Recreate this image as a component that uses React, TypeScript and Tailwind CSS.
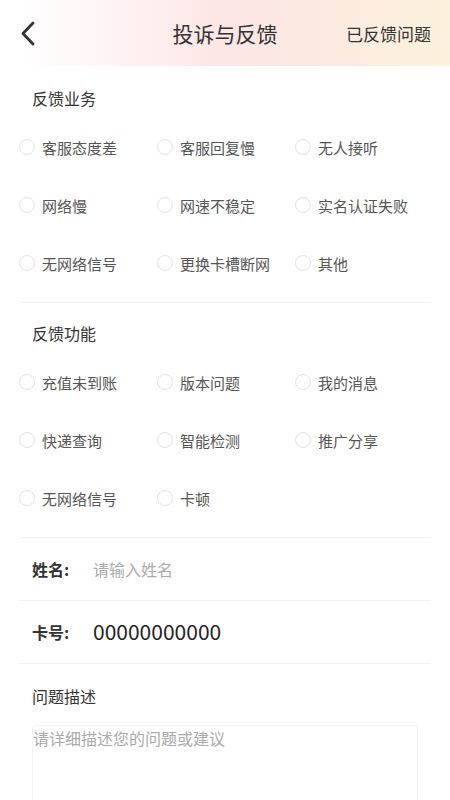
import React from "react";

const font = { fontFamily: '"Noto Sans CJK SC", "Noto Sans", sans-serif' };

function Radio({ label }: { label: string }) {
  return (
    <div className="flex items-center h-[58px]">
      <span className="w-[16px] h-[16px] rounded-full border border-[#e3e3e3] shrink-0" />
      <span className="ml-[7px] text-[15px] text-[#555555] leading-none">{label}</span>
    </div>
  );
}

function Section({ title, items, pt }: { title: string; items: string[]; pt: string }) {
  return (
    <div className={`${pt} pb-[10px] border-b border-[#f2f2f2]`}>
      <div className="pl-[13px] text-[16px] leading-[24px] text-[#333333] mb-[8px]">{title}</div>
      <div className="grid grid-cols-[138px_138px_1fr]">
        {items.map((t, i) => (
          <Radio key={i} label={t} />
        ))}
      </div>
    </div>
  );
}

export default function App() {
  return (
    <div className="w-[450px] h-[800px] bg-white overflow-hidden" style={font}>
      <div className="h-[66px] grid grid-cols-[1fr_auto_1fr] items-center bg-gradient-to-r from-white from-[5%] via-[#fde6e5] to-[#fbf1dc]">
        <div className="pl-[20px] flex items-center">
          <svg width="16" height="25" viewBox="0 0 16 25" fill="none">
            <path d="M13 2 L3 12.5 L13 23" stroke="#333333" strokeWidth="2.8" strokeLinecap="round" strokeLinejoin="round" />
          </svg>
        </div>
        <div className="text-[21px] text-[#333333] leading-none">投诉与反馈</div>
        <div className="flex justify-end pr-[19px] text-[17px] text-[#333333] leading-none">已反馈问题</div>
      </div>

      <div className="px-[19px]">
        <Section
          title="反馈业务"
          pt="pt-[20px]"
          items={["客服态度差", "客服回复慢", "无人接听", "网络慢", "网速不稳定", "实名认证失败", "无网络信号", "更换卡槽断网", "其他"]}
        />
        <Section
          title="反馈功能"
          pt="pt-[18px]"
          items={["充值未到账", "版本问题", "我的消息", "快递查询", "智能检测", "推广分享", "无网络信号", "卡顿"]}
        />

        <div className="h-[63px] flex items-center pl-[13px] border-b border-[#f2f2f2]">
          <span className="w-[61px] text-[16px] font-bold text-[#333333]">姓名:</span>
          <span className="text-[16px] text-[#aaaaaa]">请输入姓名</span>
        </div>
        <div className="h-[63px] flex items-center pl-[13px] border-b border-[#f2f2f2]">
          <span className="w-[61px] text-[16px] font-bold text-[#333333]">卡号:</span>
          <span className="text-[21px] text-[#222222]">00000000000</span>
        </div>

        <div className="pt-[20px] pl-[13px]">
          <div className="text-[16px] leading-[24px] text-[#333333]">问题描述</div>
          <div className="mt-[17px] w-[386px] h-[120px] border border-[#f3f3f3] rounded-[3px] text-[16px] leading-[24px] text-[#aaaaaa]">
            请详细描述您的问题或建议
          </div>
        </div>
      </div>
    </div>
  );
}
